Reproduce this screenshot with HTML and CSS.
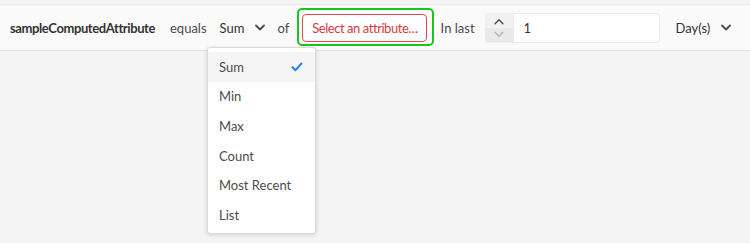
FILE: index.html
```html
<!DOCTYPE html>
<html>
<head>
<meta charset="utf-8">
<link rel="stylesheet" href="styles.css">
</head>
<body>
<div class="bar">
  <span class="attr">sampleComputedAttribute</span>
  <span class="label">equals</span>
  <span class="picker">Sum
    <svg class="chev" width="10" height="7" viewBox="0 0 10 7"><path d="M1 1.5 L5 5.5 L9 1.5" fill="none" stroke="#4b4b4b" stroke-width="1.8" stroke-linecap="round" stroke-linejoin="round"/></svg>
  </span>
  <span class="label of">of</span>
  <span class="focus"><span class="attrbtn">Select an attribute…</span></span>
  <span class="label last">In last</span>
  <span class="stepper">
    <span class="steps">
      <svg class="up" width="9" height="6" viewBox="0 0 9 6"><path d="M1 5 L4.5 1.5 L8 5" fill="none" stroke="#4b4b4b" stroke-width="1.3" stroke-linecap="round" stroke-linejoin="round"/></svg>
      <svg class="down" width="9" height="6" viewBox="0 0 9 6"><path d="M1 1 L4.5 4.5 L8 1" fill="none" stroke="#b3b3b3" stroke-width="1.3" stroke-linecap="round" stroke-linejoin="round"/></svg>
    </span>
    <span class="field">1</span>
  </span>
  <span class="picker days">Day(s)
    <svg class="chev" width="10" height="7" viewBox="0 0 10 7"><path d="M1 1.5 L5 5.5 L9 1.5" fill="none" stroke="#4b4b4b" stroke-width="1.8" stroke-linecap="round" stroke-linejoin="round"/></svg>
  </span>
</div>
<div class="menu">
  <div class="item selected">Sum
    <svg width="12" height="10" viewBox="0 0 12 10"><path d="M1.5 5.2 L4.5 8.2 L10.5 1.5" fill="none" stroke="#2680eb" stroke-width="2" stroke-linecap="round" stroke-linejoin="round"/></svg>
  </div>
  <div class="item">Min</div>
  <div class="item">Max</div>
  <div class="item">Count</div>
  <div class="item">Most Recent</div>
  <div class="item">List</div>
</div>
</body>
</html>
```

FILE: styles.css
```css
html, body {
  margin: 0;
  padding: 0;
}
body {
  width: 750px;
  height: 243px;
  background: #f4f4f4;
  font-family: Lato, "Noto Sans", sans-serif;
  font-size: 13px;
  color: #4b4b4b;
  position: relative;
  overflow: hidden;
}
.bar {
  height: 45px;
  margin-top: 4px;
  border-top: 1px solid #ececec;
  border-bottom: 1px solid #e1e1e1;
  background: #fafafa;
  display: flex;
  align-items: center;
  padding-left: 10px;
  white-space: nowrap;
}
.bar > * {
  flex-shrink: 0;
}
.attr {
  font-weight: 700;
  color: #323232;
  letter-spacing: -0.4px;
  width: 144px;
  margin-right: 16px;
}
.label {
  color: #4b4b4b;
}
.picker {
  display: flex;
  align-items: center;
  margin-left: 13px;
  color: #323232;
}
.picker .chev {
  margin-left: 11px;
}
.of {
  margin-left: 12px;
}
.focus {
  margin-left: 8px;
  margin-bottom: 2px;
  border: 2px solid #17c81b;
  border-radius: 5px;
  padding: 4px 5px 2px 3px;
  display: flex;
}
.attrbtn {
  box-sizing: border-box;
  border: 1px solid #e34850;
  border-radius: 4px;
  color: #d7373f;
  height: 28px;
  line-height: 26px;
  letter-spacing: -0.45px;
  padding: 0 8px 0 9px;
  background: #fff;
}
.last {
  margin-left: 7px;
}
.stepper {
  display: flex;
  margin-left: 10px;
  height: 30px;
}
.steps {
  width: 28px;
  display: flex;
  flex-direction: column;
  border-radius: 4px 0 0 4px;
  overflow: hidden;
}
.steps svg {
  display: block;
  width: 28px;
  height: 15px;
  box-sizing: border-box;
}
.steps .up {
  background: #f1f1f1;
  padding: 5px 9px 3px;
}
.steps .down {
  background: #e9e9e9;
  padding: 3px 9px 5px;
}
.field {
  width: 135px;
  background: #fff;
  border: 1px solid #eaeaea;
  border-radius: 0 4px 4px 0;
  padding-left: 10px;
  line-height: 28px;
  color: #323232;
}
.days {
  margin-left: 16px;
}
.days .chev {
  margin-left: 11px;
}
.menu {
  position: absolute;
  left: 207px;
  top: 47px;
  width: 107px;
  background: #fff;
  border: 1px solid #dadada;
  border-radius: 3px;
  box-shadow: 0 1px 4px rgba(0,0,0,0.15);
  padding: 4px 0 3px;
}
.item {
  height: 29.6px;
  display: flex;
  align-items: center;
  justify-content: space-between;
  padding: 0 12px 0 11px;
  color: #4b4b4b;
}
.item.selected {
  background: #f5f5f5;
}
```
